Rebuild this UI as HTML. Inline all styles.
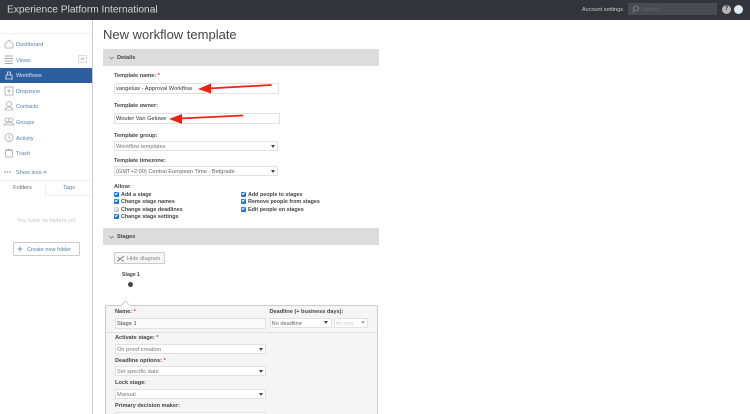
<!DOCTYPE html>
<html><head><meta charset="utf-8">
<style>
html,body{margin:0;padding:0;width:750px;height:414px;overflow:hidden;background:#fff;font-family:"Liberation Sans",sans-serif}
#p{position:relative;width:750px;height:414px;overflow:hidden}
.a{position:absolute;white-space:nowrap}
.nav{left:16px;font-size:5.6px;color:#5b7fae;line-height:8px;transform:translateY(1px)}
.lb{font-size:5.6px;font-weight:bold;color:#444;line-height:7px;transform:translateY(1px)}
.lb i{color:#e33;font-style:normal}
.in{box-sizing:border-box;background:#fff;border:1px solid #e2e2e2;font-size:5.7px;color:#555;padding:0 0 0 1px}
.ar{position:absolute;width:0;height:0;border-left:2.5px solid transparent;border-right:2.5px solid transparent;border-top:3px solid #444}
.cb{position:absolute;width:5px;height:5px;background:#1473e6;border-radius:1px}
.cb:after{content:"";position:absolute;left:1.2px;top:.4px;width:1.4px;height:2.4px;border:solid #fff;border-width:0 .9px .9px 0;transform:rotate(40deg)}
.cl{font-size:5.4px;color:#444;line-height:7px;font-weight:bold;transform:translateY(1px)}
svg{position:absolute;left:0;top:0}
</style></head><body><div id="p">
<div class="a" style="left:0;top:0;width:750px;height:20px;background:#34353a"></div>
<div class="a" style="left:7px;top:3px;font-size:10.200px;line-height:13px;color:#d6d6d6;transform:translateY(.5px)">Experience Platform International</div>
<div class="a" style="left:582px;top:5.500px;font-size:5.6px;line-height:8px;color:#ccc">Account settings</div>
<div class="a" style="left:628px;top:3px;width:89px;height:12px;background:#4a4b50"></div>
<div class="a" style="left:642px;top:5.500px;font-size:5.6px;line-height:8px;color:#66676b">Search</div>
<div class="a" style="left:722px;top:5px;width:9px;height:9px;border-radius:50%;background:#b5b5b5;color:#333;font-size:6px;line-height:9px;text-align:center;font-weight:bold">?</div>
<div class="a" style="left:734px;top:5px;width:9px;height:9px;border-radius:50%;background:#dde8f8"></div>

<div class="a" style="left:92px;top:20px;width:1px;height:394px;background:#ccc"></div>
<div class="a" style="left:0;top:33px;width:92px;height:1px;background:#eee"></div>
<div class="a" style="left:0;top:67.5px;width:92px;height:15.5px;background:#2c5d9c"></div>

<div class="a nav" style="top:40px">Dashboard</div>
<div class="a nav" style="top:55.500px">Views</div>
<div class="a nav" style="top:71px;color:#dfe7f2">Workflows</div>
<div class="a nav" style="top:86.500px">Dropzone</div>
<div class="a nav" style="top:102px">Contacts</div>
<div class="a nav" style="top:118px">Groups</div>
<div class="a nav" style="top:133.500px">Activity</div>
<div class="a nav" style="top:149px">Trash</div>
<div class="a nav" style="top:168px">Show less</div>
<div class="a" style="left:78px;top:55px;width:9px;height:8px;box-sizing:border-box;border:1px solid #ddd;background:#fafafa"></div>

<div class="a" style="left:0;top:180px;width:45px;height:16px;border-top:1px solid #eee;box-sizing:border-box;color:#666;font-size:5.6px;line-height:14px;text-align:center">Folders</div>
<div class="a" style="left:45px;top:180px;width:47px;height:16px;box-sizing:border-box;border:1px solid #eee;border-right:0;color:#5b7fae;font-size:5.6px;line-height:14px;text-align:center">Tags</div>
<div class="a" style="left:17px;top:217px;font-size:5.6px;line-height:8px;color:#c4c4c4">You have no folders yet</div>
<div class="a" style="left:13px;top:242px;width:67px;height:14px;box-sizing:border-box;border:1px solid #ccc;color:#5b7fae;font-size:5.6px;line-height:14px;padding-left:13px;border-radius:1px">Create new folder</div>

<div class="a" style="left:103px;top:26px;font-size:13px;line-height:18px;color:#444">New workflow template</div>

<div class="a" style="left:103px;top:49px;width:276px;height:17px;background:#dcdcdc"></div>
<div class="a lb" style="left:117px;top:53.500px">Details</div>
<div class="a lb" style="left:114px;top:71.500px">Template name: <i>*</i></div>
<div class="a in" style="left:114px;top:83px;width:165px;height:11px;line-height:10px;color:#333">vangeluw - Approval Workflow</div>
<div class="a lb" style="left:114px;top:101.500px">Template owner:</div>
<div class="a in" style="left:114px;top:113px;width:166px;height:11px;line-height:10px;color:#333">Wouter Van Geluwe</div>
<div class="a lb" style="left:114px;top:131.500px">Template group:</div>
<div class="a in" style="left:114px;top:140.500px;width:164px;height:10px;line-height:10px;color:#777">Workflow templates</div>
<div class="ar" style="left:271px;top:144.500px"></div>
<div class="a lb" style="left:114px;top:156.500px">Template timezone:</div>
<div class="a in" style="left:114px;top:166px;width:164px;height:10px;line-height:10px;color:#666">(GMT+2:00) Central European Time - Belgrade</div>
<div class="ar" style="left:271px;top:170px"></div>

<div class="a lb" style="left:114px;top:182.500px">Allow:</div>
<div class="cb" style="left:114px;top:191.500px"></div><div class="a cl" style="left:121px;top:190.500px">Add a stage</div>
<div class="cb" style="left:114px;top:199px"></div><div class="a cl" style="left:121px;top:198px">Change stage names</div>
<div class="cb" style="left:114px;top:206.500px;background:#ccc"></div><div class="a cl" style="left:121px;top:205.500px">Change stage deadlines</div>
<div class="cb" style="left:114px;top:214px"></div><div class="a cl" style="left:121px;top:213px">Change stage settings</div>
<div class="cb" style="left:241px;top:191.500px"></div><div class="a cl" style="left:248px;top:190.500px">Add people to stages</div>
<div class="cb" style="left:241px;top:199px"></div><div class="a cl" style="left:248px;top:198px">Remove people from stages</div>
<div class="cb" style="left:241px;top:206.500px"></div><div class="a cl" style="left:248px;top:205.500px">Edit people on stages</div>

<div class="a" style="left:103px;top:228px;width:276px;height:17px;background:#dcdcdc"></div>
<div class="a lb" style="left:117px;top:232.500px">Stages</div>
<div class="a" style="left:114px;top:252px;width:51px;height:12px;box-sizing:border-box;border:1px solid #ccc;background:#f6f6f6;color:#888;font-size:5.6px;line-height:12px;padding-left:12px;border-radius:1px">Hide diagram</div>
<div class="a" style="left:122px;top:271.500px;font-size:5px;line-height:7px;font-weight:bold;color:#444">Stage 1</div>
<div class="a" style="left:128px;top:281.500px;width:5px;height:5px;border-radius:50%;background:#444"></div>

<div class="a" style="left:105px;top:304.500px;width:273px;height:110px;box-sizing:border-box;border:1px solid #ccc;border-bottom:0;background:#f5f5f5;border-radius:2px 2px 0 0"></div>
<div class="a" style="left:122px;top:301.500px;width:6px;height:6px;background:#fff;border-left:1px solid #ccc;border-top:1px solid #ccc;transform:rotate(45deg)"></div>
<div class="a" style="left:106px;top:331.500px;width:271px;height:1px;background:#e2e2e2"></div>

<div class="a lb" style="left:115px;top:307.500px">Name: <i>*</i></div>
<div class="a in" style="left:115px;top:317.500px;width:151px;height:11px;line-height:10px;color:#444;background:#fafafa">Stage 1</div>
<div class="a lb" style="left:269.500px;top:307.500px">Deadline (+ business days):</div>
<div class="a in" style="left:269.500px;top:317.500px;width:62px;height:10px;line-height:10px;color:#666">No deadline</div>
<div class="ar" style="left:324px;top:321px"></div>
<div class="a in" style="left:334px;top:317.500px;width:34px;height:10px;line-height:10px;color:#ccc">hh:mm</div>
<div class="ar" style="left:361px;top:321px;border-top-color:#aaa"></div>

<div class="a lb" style="left:115px;top:334px">Activate stage: <i>*</i></div>
<div class="a in" style="left:115px;top:344px;width:151px;height:10px;line-height:10px;color:#777">On proof creation</div>
<div class="ar" style="left:259px;top:348px"></div>
<div class="a lb" style="left:115px;top:356.500px">Deadline options: <i>*</i></div>
<div class="a in" style="left:115px;top:366px;width:151px;height:10px;line-height:10px;color:#777">Set specific date</div>
<div class="ar" style="left:259px;top:370px"></div>
<div class="a lb" style="left:115px;top:379px">Lock stage:</div>
<div class="a in" style="left:115px;top:389px;width:151px;height:10px;line-height:10px;color:#777">Manual</div>
<div class="ar" style="left:259px;top:393px"></div>
<div class="a lb" style="left:115px;top:402px">Primary decision maker:</div>
<div class="a in" style="left:115px;top:411.500px;width:151px;height:10px"></div>

<svg width="750" height="414" fill="none" stroke-width=".8">
<g stroke="#aaa">
<path d="M5 44 L9 40 L13 44 V48 H5Z"/>
<path d="M4.500 56H13M4.500 58.500H13M4.500 61H13M4.500 63.500H13" stroke-width="1"/>
<rect x="5" y="87" width="8" height="8"/><path d="M7 91h4M9 89v4"/>
<circle cx="9" cy="104" r="2.500"/><path d="M5 110c0-4 8-4 8 0z"/>
<circle cx="7" cy="120" r="2"/><circle cx="11" cy="120" r="2"/><path d="M4 125c0-3 10-3 10 0z"/>
<circle cx="9" cy="137.500" r="4"/><path d="M9 135v3h2"/>
<path d="M5.500 150.500H12.500V157H5.500ZM5 150H13M7.500 149H10.500"/>
<path d="M81 58l1.500 1.500L84 58"/>
</g>
<g stroke="#dfe7f2"><path d="M5 79H13M6 79V75H12V79M7.500 75V72H10.500V75"/></g>
<g fill="#aaa" stroke="none"><circle cx="5" cy="172" r=".9"/><circle cx="7.500" cy="172" r=".9"/><circle cx="10" cy="172" r=".9"/></g>
<path d="M43.500 173l1.500-1.500 1.500 1.500" stroke="#5b7fae"/>
<circle cx="636" cy="8.500" r="2.500" stroke="#888"/><path d="M634 10.500l-1.500 2" stroke="#888"/>
<path d="M109.500 57l2 2 2-2M109.500 236l2 2 2-2" stroke="#777"/>
<path d="M20 246.500v5M17.500 249h5" stroke="#5b7fae"/>
<path d="M117 261.500L124 256M118 257l2 3M121 260l3 1" stroke="#777"/>
<path d="M271.500 85L208 88.500" stroke="#f3200f" stroke-width="1.800"/><path d="M198 89L211 83.500V93.500Z" fill="#f3200f"/>
<path d="M243 115.500L180 118.500" stroke="#f3200f" stroke-width="1.800"/><path d="M169 119L182 114V124Z" fill="#f3200f"/>
</svg>
</div></body></html>
